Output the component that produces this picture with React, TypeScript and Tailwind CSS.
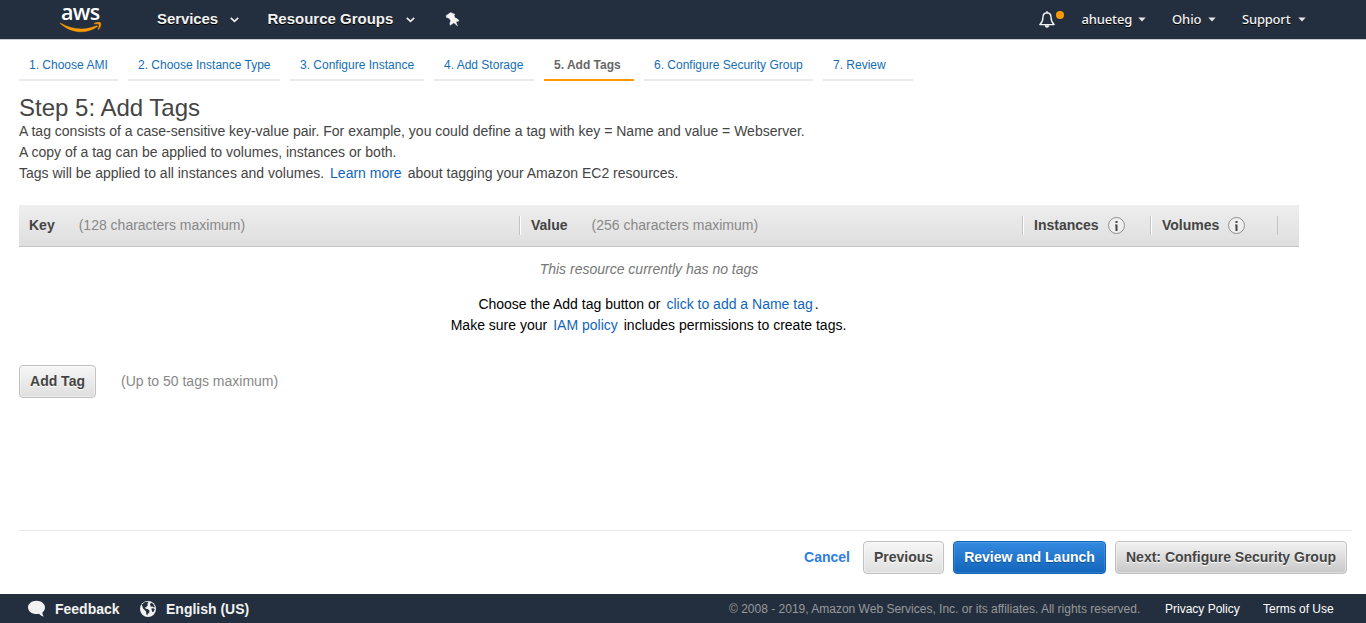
import React from "react";

const sans = "font-['Liberation_Sans',Arial,sans-serif]";

function Chevron({ className = "" }: { className?: string }) {
  return (
    <svg className={className} width="9" height="6" viewBox="0 0 9 6" fill="none" stroke="#eee" strokeWidth="1.7">
      <path d="M.8 .8l3.700 3.500L8.200 .8" />
    </svg>
  );
}

function Caret({ className = "" }: { className?: string }) {
  return (
    <svg className={className} width="8" height="5" viewBox="0 0 8 5" fill="#e6e6e6">
      <path d="M.3 .6h7.400L4 4.500z" />
    </svg>
  );
}

function AwsLogo() {
  return (
    <div className="ml-[59px] flex w-[44px] shrink-0 flex-col">
      <span className="h-[21px] whitespace-nowrap pl-[2px] font-['Open_Sans',sans-serif] text-[21.5px] font-semibold leading-[22px] tracking-[-0.6px] text-white [text-shadow:none]">
        aws
      </span>
      <svg width="44" height="11" viewBox="0 0 44 11" fill="#f90" stroke="#f90" strokeWidth=".4">
        <path d="M1.500 1.700c5.600 5 12.700 8.100 20.700 8.100 5.600 0 11.300-1.700 15.900-5.100.8-.6.300-1.300-.6-.9-4.700 2-9.900 3.100-14.900 3.100-7.600 0-14.500-2-20.700-5.700-.6-.3-.9.100-.4.500z" />
        <path d="M35.300 1.300c2-1.200 5.800-1.300 6.400-.4.500 1.700-.4 4.700-2.200 6.600l-.5-.2c.8-2 1.400-4.300 1-4.900-.5-.7-2.900-.6-4.700-.5z" />
      </svg>
    </div>
  );
}

function Pin() {
  return (
    <svg className="ml-[30px]" width="15" height="15" viewBox="0 0 14 14" fill="#f5f5f5" stroke="#f5f5f5" strokeWidth=".4">
      <path d="M5.200 .5l3.900 1.500-.6 1.400 1 2.300c1.600.2 2.900 1.200 3.500 2.700l-2.800 .8 1.500 3.900-3.400-3-3.400 2.300c-.6-1.400-.4-2.700.5-3.900L4.100 6 1.300 5 1 3.400z" />
    </svg>
  );
}

function Bell() {
  return (
    <svg width="17" height="17" viewBox="0 0 17 17" fill="none" stroke="#f2f2f2" strokeWidth="1.400">
      <path d="M8 1.700C5 1.900 3.900 4.300 3.900 6.700c0 3.400-.8 4.900-3 6.900h14.200c-2.200-2-3-3.500-3-6.900 0-2.400-1.100-4.800-4.100-5z" strokeLinejoin="round" />
      <path d="M7.200 .9h1.600" />
      <path d="M5.600 14.200h4.800c-.2 1.500-1.100 2.500-2.400 2.500s-2.200-1-2.400-2.500z" fill="#f2f2f2" stroke="none" />
    </svg>
  );
}

function Info() {
  return (
    <svg className="ml-[9px]" width="18" height="18" viewBox="0 0 18 18">
      <circle cx="8.500" cy="8.500" r="8" fill="#eee" stroke="#8f8f8f" strokeWidth="1" />
      <path d="M7.500 4h2v2h-2zM7 7.500h2.500V14h-2V8.500H7z" fill="#444" />
    </svg>
  );
}

function Globe() {
  return (
    <svg className="mr-[10px]" width="16" height="16" viewBox="0 0 16 16">
      <circle cx="8" cy="8" r="8" fill="#f2f2f2" />
      <path d="M1.800 3.800l2.700-2.500 3.200-.5.900 1.200-1.600.8 1 1.200-1.700 1.900-1.300.5.700 1.300 1.900.4 2 1.600-.4 1.900-1.500 1.500-.5 1.400-1-1.700-.1-2.100-1.400-1.600-1.600-1.700z" fill="#232f3e" />
      <path d="M9.900 2.900l1.700-1.100 2 1.700 1.200 2.600-1 .3-1.200-.8-1.700.1-.5-1.300zM11.300 7.500l2.400-.2 1 1.300-1.500 2.700-1.100-.9z" fill="#232f3e" />
    </svg>
  );
}

const tabs = [
  { label: "1. Choose AMI", width: "w-[99px]" },
  { label: "2. Choose Instance Type", width: "w-[152px]" },
  { label: "3. Configure Instance", width: "w-[134px]" },
  { label: "4. Add Storage", width: "w-[100px]" },
  { label: "5. Add Tags", width: "w-[90px]", active: true },
  { label: "6. Configure Security Group", width: "w-[169px]" },
  { label: "7. Review", width: "w-[90px]" },
];

function Divider() {
  return <span className="h-[19px] w-[2px] shrink-0 border-l border-[#c4c4c4] bg-white" />;
}

const button =
  "h-[33px] shrink-0 whitespace-nowrap rounded-[4px] border text-center text-[14px] font-bold leading-[31px]";
const grey =
  "border-[#c2c2c2] text-[#444] [text-shadow:0_1px_0_#fff] shadow-[inset_0_0_0_1px_rgba(255,255,255,0.35)]";

export default function App() {
  return (
    <div className={`flex h-[623px] w-[1366px] flex-col overflow-hidden bg-white text-[14px] text-[#444] ${sans}`}>
      <header className="flex h-[40px] shrink-0 border-b border-[#c9ccd2] bg-[#232f3e] pt-[1px] text-[15px] font-bold text-[#f2f2f2] [text-shadow:0_1px_0_#000]">
        <AwsLogo />
        <div className="ml-[54px] flex h-[36px] items-center">
          <span className="w-[61px] whitespace-nowrap tracking-[-0.1px]">Services</span>
          <Chevron className="ml-[12px] mt-[2px]" />
          <span className="ml-[28.5px] w-[126px] whitespace-nowrap">Resource Groups</span>
          <Chevron className="ml-[12px] mt-[2px]" />
          <Pin />
        </div>
        <div className="ml-auto flex h-[37px] items-center pr-[60px] font-['Noto_Sans',sans-serif] text-[13px] font-medium">
          <Bell />
          <span className="mb-[9px] size-[8px] rounded-full bg-[#ff9900]" />
          <span className="ml-[17.5px] w-[49.5px] whitespace-nowrap tracking-[-0.15px]">ahueteg</span>
          <Caret className="ml-[7px]" />
          <span className="ml-[26px] w-[28px] whitespace-nowrap tracking-[-0.1px]">Ohio</span>
          <Caret className="ml-[8px]" />
          <span className="ml-[26px] w-[48px] whitespace-nowrap tracking-[-0.2px]">Support</span>
          <Caret className="ml-[8px]" />
        </div>
      </header>

      <nav className="flex h-[41px] shrink-0 gap-[10px] pl-[19px] text-[12px] text-[#146eb4]">
        {tabs.map((t) => (
          <div
            key={t.label}
            className={`${t.width} shrink-0 whitespace-nowrap border-b-2 pl-[10px] pt-[16px] leading-[18px] ${
              t.active ? "border-[#ff9900] font-bold text-[#666]" : "border-[#eaeaea]"
            }`}
          >
            {t.label}
          </div>
        ))}
      </nav>

      <main className="flex flex-1 flex-col pl-[19px]">
        <h1 className="mt-[13px] h-[27px] text-[24px] leading-[27px]">Step 5: Add Tags</h1>
        <div className="leading-[21px]">
          <p>A tag consists of a case-sensitive key-value pair. For example, you could define a tag with key = Name and value = Webserver.</p>
          <p>A copy of a tag can be applied to volumes, instances or both.</p>
          <p>
            Tags will be applied to all instances and volumes.
            <span className="mx-[6px] text-[#1166bb]">Learn more</span>
            about tagging your Amazon EC2 resources.
          </p>
        </div>

        <div className="mt-[21px] flex h-[42px] w-[1280px] items-center border-b border-[#c4c4c4] bg-linear-to-b from-[#eeeeee] to-[#dfdfdf] font-bold">
          <div className="flex w-[500px] pl-[10px]">
            Key<span className="ml-[24px] font-normal text-[#888]">(128 characters maximum)</span>
          </div>
          <Divider />
          <div className="flex w-[501px] pl-[10px]">
            Value<span className="ml-[24px] font-normal text-[#888]">(256 characters maximum)</span>
          </div>
          <Divider />
          <div className="flex w-[126px] items-center pl-[10px]">Instances<Info /></div>
          <Divider />
          <div className="flex w-[125px] items-center pl-[10px]">Volumes<Info /></div>
          <span className="h-[19px] w-px bg-[#c4c4c4]" />
        </div>

        <div className="w-[1280px] text-center leading-[21px] text-black">
          <p className="mt-[12px] pr-[20px] italic text-[#777]">This resource currently has no tags</p>
          <p className="mt-[14px] pr-[21px]">
            Choose the<span className="ml-[3px]">Add tag button or</span><span className="ml-[6px] mr-[2px] text-[#1166bb]">click to add a Name tag</span>.
          </p>
          <p className="pr-[21px]">
            Make sure your<span className="mx-[6px] text-[#1166bb]">IAM policy</span>includes permissions to create tags.
          </p>
        </div>

        <div className="mt-[29px] flex items-center">
          <button className={`${button} ${grey} w-[77px] bg-linear-to-b from-[#f6f6f6] to-[#dfdfdf]`}>Add Tag</button>
          <span className="ml-[25px] text-[#888]">(Up to 50 tags maximum)</span>
        </div>
      </main>

      <div className="ml-[19px] flex h-[64px] w-[1333px] shrink-0 justify-end border-t border-[#eaeaea] pr-[5px] pt-[10px]">
        <span className="mr-[13px] font-bold leading-[33px] text-[#2e7de1]">Cancel</span>
        <button className={`${button} ${grey} mr-[9px] w-[81px] bg-linear-to-b from-[#f6f6f6] to-[#dfdfdf]`}>Previous</button>
        <button className={`${button} mr-[9px] w-[153px] border-[#1166bb] bg-linear-to-b from-[#328ae0] to-[#1166bb] text-white shadow-[inset_0_0_0_1px_rgba(255,255,255,0.12)] [text-shadow:0_1px_0_#0a4f96]`}>Review and Launch</button>
        <button className={`${button} ${grey} w-[232px] bg-linear-to-b from-[#f2f2f2] to-[#c8c8c8]`}>Next: Configure Security Group</button>
      </div>

      <footer className="flex h-[29px] shrink-0 items-center bg-[#232f3e] pl-[28px] pr-[32px] text-[12px] text-white">
        <svg className="mr-[10px]" width="17" height="17" viewBox="0 0 17 17" fill="#f2f2f2">
          <path d="M8.500.800C3.800.800 0 3.700 0 7.400S3.800 14 8.500 14c.9 0 1.800-.1 2.600-.3 1 1.300 2.500 2.400 4.700 2.800-.9-1.100-1.400-2.300-1.400-4.100C16 11.200 17 9.400 17 7.400 17 3.700 13.200.800 8.500.800z" />
        </svg>
        <span className="mr-[20px] w-[65px] whitespace-nowrap pt-[2px] text-[14px] font-bold text-[#f2f2f2]">Feedback</span>
        <Globe />
        <span className="whitespace-nowrap pt-[2px] text-[14px] font-bold text-[#f2f2f2]">English (US)</span>
        <span className="ml-auto w-[411px] whitespace-nowrap text-[#999]">© 2008 - 2019, Amazon Web Services, Inc. or its affiliates. All rights reserved.</span>
        <span className="ml-[25px] w-[74px] whitespace-nowrap">Privacy Policy</span>
        <span className="ml-[24px] w-[71px] whitespace-nowrap">Terms of Use</span>
      </footer>
    </div>
  );
}
